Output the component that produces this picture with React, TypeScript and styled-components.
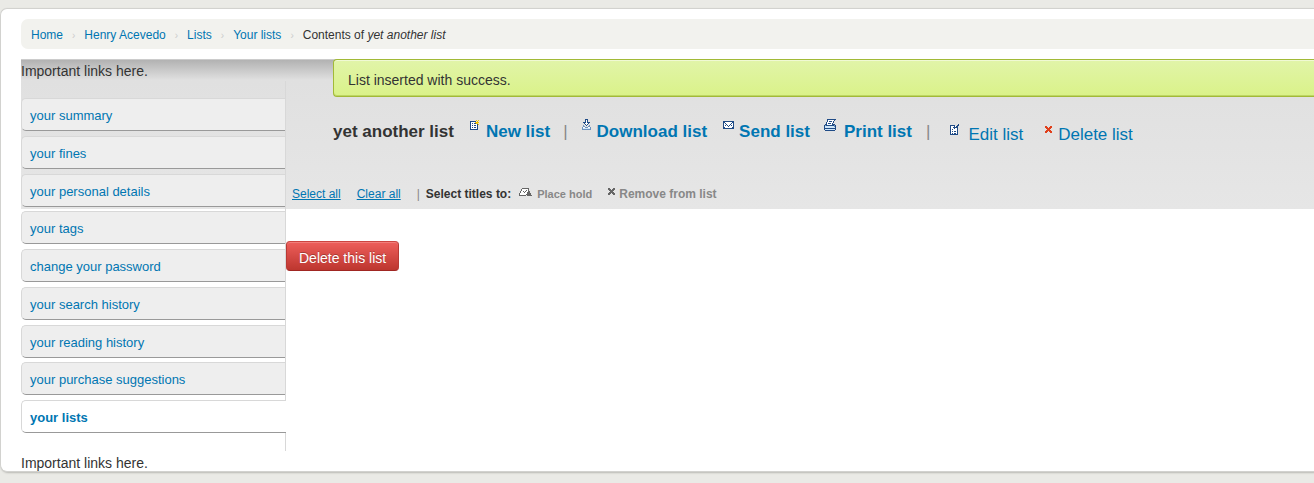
import React from "react";
import styled, { createGlobalStyle } from "styled-components";

const GlobalStyle = createGlobalStyle`
  * { box-sizing: border-box; }
  body {
    margin: 0;
    background: #eaeae6;
    color: #333;
    font: 14px/20px "Liberation Sans", Arial, Helvetica, sans-serif;
  }
  a { color: #0076b2; text-decoration: none; }
  a:hover { text-decoration: underline; }
  ul, ol { list-style: none; margin: 0; padding: 0; }
`;

const Page = styled.div`
  padding: 8px 0 12px;
`;

const Card = styled.div`
  padding: 10px 0 0 20px;
  background: #fff;
  border: 1px solid #d2d2cf;
  border-right: 0;
  border-radius: 7px 0 0 7px;
  box-shadow: 1px 1px 2px #b9b9b4;
`;

const Breadcrumb = styled.ol`
  display: flex;
  padding: 6px 10px 4px;
  margin-bottom: 10px;
  background: #f2f2ee;
  border-radius: 7px 0 0 7px;
  font-size: 12px;
`;

const Crumb = styled.li`
  &:not(:last-child)::after {
    content: "›";
    padding: 0 9px;
    color: #ccc;
    font-size: 10px;
    line-height: 10px;
  }
`;

const Columns = styled.div`
  display: flex;
  background: linear-gradient(#ccc 1px, #b2b2b2 1px, #e0e0e0 21px, #e6e6e6 150px) top / 100% 150px no-repeat;
`;

const Sidebar = styled.aside`
  flex: 0 0 265px;
`;

const Note = styled.p<{ $last?: boolean }>`
  margin: 0;
  padding-top: 2px;
  margin-bottom: ${(p) => (p.$last ? "-2px" : "0")};
`;

const Menu = styled.nav`
  padding: 17px 0 13px;
  border-right: 1px solid #d8d8d8;
`;

const MenuList = styled.ul`
  display: grid;
  grid-auto-rows: 1fr;
  height: 340px;
`;

const MenuLink = styled.a<{ $active?: boolean }>`
  display: block;
  height: 33px;
  padding-left: 8px;
  margin-right: ${(p) => (p.$active ? "-1px" : "0")};
  border: 1px solid #d8d8d8;
  border-bottom-color: #999;
  border-right: 0;
  border-radius: 5px 0 0 5px;
  background: ${(p) => (p.$active ? "#fff" : "#eee")};
  font-size: 13px;
  line-height: 33px;
  font-weight: ${(p) => (p.$active ? "bold" : "normal")};
`;

const Main = styled.main`
  flex: 1;
  min-width: 0;
`;

const Alert = styled.div`
  margin-left: 47px;
  padding: 10px 14px 6px;
  border: 1px solid #a2ba37;
  border-right: 0;
  border-radius: 4px 0 0 4px;
  background: linear-gradient(#e1f4a9, #daf289);
  box-shadow: inset 0 1px 0 #f0f9d4, inset 0 -1px 0 #bdd663;
`;

const Toolbar = styled.div`
  display: flex;
  margin: 25px 0 0 47px;
  font-size: 17px;
  white-space: nowrap;
`;

const Title = styled.h1`
  margin: 0 16px 0 0;
  font-size: 17px;
  line-height: 20px;
`;

const Action = styled.a<{ $gap: number; $plain?: boolean }>`
  display: flex;
  margin-right: ${(p) => p.$gap}px;
  padding-top: ${(p) => (p.$plain ? "3px" : "0")};
  font-weight: ${(p) => (p.$plain ? "normal" : "bold")};
`;

const Divider = styled.span<{ $gap: number }>`
  margin-right: ${(p) => p.$gap}px;
  color: #888;
  font-weight: normal;
`;

const IconBox = styled.svg<{ $gap: number; $drop: number }>`
  flex: none;
  margin-right: ${(p) => p.$gap}px;
  margin-top: ${(p) => p.$drop}px;
`;

const SelectionBar = styled.div`
  display: flex;
  margin-top: 39px;
  padding-left: 6px;
  font-size: 12px;
  font-weight: bold;
  white-space: nowrap;
`;

const SelectLink = styled.a`
  margin-right: 16px;
  font-weight: normal;
  text-decoration: underline;
`;

const SelectLabel = styled.span`
  margin-left: 6px;
`;

const BulkButton = styled.button<{ $small?: boolean }>`
  display: flex;
  margin: 0 8px;
  padding: 0;
  border: 0;
  background: none;
  color: #888;
  font: bold ${(p) => (p.$small ? "11px" : "12px")} / 20px "Liberation Sans", Arial, sans-serif;
`;

const DeleteButton = styled.button`
  display: block;
  height: 30px;
  margin-top: 37px;
  padding: 4px 12px 0;
  border: 1px solid #b83a35;
  border-top-color: #cc4540;
  border-bottom-color: #a02622;
  border-radius: 4px;
  background: linear-gradient(#ee5f5b, #bd362f);
  box-shadow: inset 0 1px 0 #f27f7b;
  color: #fff;
  font: 14px/20px "Liberation Sans", Arial, sans-serif;
  text-shadow: 0 -1px 0 rgba(0, 0, 0, 0.25);
`;

const palette: Record<string, string> = {
  b: "#1f4b86",
  m: "#6f93bd",
  w: "#ffffff",
  l: "#cfe6f8",
  y: "#f5c400",
  r: "#e0401c",
  g: "#666666",
};

const icons = {
  newList: [
    "......y.y",
    "bbbbbb.y.",
    "bwwwwyyyy",
    "bwbwbbyy.",
    "bwwwwwwby",
    "bwbwbbwb.",
    "bwwwwwwb.",
    "bwbwbbwb.",
    "bwwwwwwb.",
    "bbbbbbbb.",
  ],
  download: [
    "...bbb...",
    "...bwb...",
    "...bwb...",
    ".bbbwbbb.",
    "..bwwwb..",
    "...bwb...",
    ".m..b..m.",
    ".mm...mm.",
    "mwwmmmwwm",
    "mlllllllm",
    "mmmmmmmmm",
  ],
  send: [
    "bbbbbbbbbbb",
    "bbwwwwwwwbb",
    "bwbwwwwwbwb",
    "bwwbwwwbwwb",
    "bwbwbwbwbwb",
    "bwwwwbwwwwb",
    "bbwwwwwwwbb",
    "bbbbbbbbbbb",
  ],
  print: [
    "...bbbbbbbbb",
    "...bwwwwwwb.",
    "...bwbbbwb..",
    "..bwwwwwwb..",
    "..bwbbbwb...",
    ".bbwwwwwbbb.",
    "bmbbbbbbbbmb",
    "blllllllllmb",
    "bllllllllllb",
    "bbbbbbbbbbbb",
    "bllllllllllb",
    ".bbbbbbbbbb.",
  ],
  edit: [
    "........b",
    "bbbbb..bb",
    "bwwwbwbb.",
    "bwwbbbbb.",
    "bwwwbwwb.",
    "bwbwwwwb.",
    "bwwwwwwb.",
    "bwbwbbwb.",
    "bwwwwwwb.",
    "bwbwbbwb.",
    "bbbbbbbb.",
  ],
  remove: ["rr...rr", "rrr.rrr", ".rrrrr.", "..rrr..", ".rrrrr.", "rrr.rrr", "rr...rr"],
  clear: ["gg...gg", "ggg.ggg", ".ggggg.", "..ggg..", ".ggggg.", "ggg.ggg", "gg...gg"],
  hold: [
    "...ggggggg...",
    "..gwwwwwwg...",
    "..gwwwwgwg...",
    ".gwwgwgwwgg..",
    ".gwwwgwwggg..",
    "gwwwwwwwgggg.",
    "gwwwwwwggggg.",
    "ggggggg.ggggg",
  ],
};

function Icon({ name, gap, drop }: { name: keyof typeof icons; gap: number; drop: number }) {
  const rows = icons[name];
  return (
    <IconBox $gap={gap} $drop={drop} width={rows[0].length} height={rows.length} shapeRendering="crispEdges" aria-hidden="true">
      {rows.flatMap((row, y) =>
        [...row].map((c, x) =>
          c === "." ? null : <rect key={`${x}-${y}`} x={x} y={y} width="1" height="1" fill={palette[c]} />
        )
      )}
    </IconBox>
  );
}

const crumbs = ["Home", "Henry Acevedo", "Lists", "Your lists"];

const menu = [
  "your summary",
  "your fines",
  "your personal details",
  "your tags",
  "change your password",
  "your search history",
  "your reading history",
  "your purchase suggestions",
  "your lists",
];

export default function App() {
  return (
    <Page>
      <GlobalStyle />
      <Card>
        <Breadcrumb>
          {crumbs.map((c) => (
            <Crumb key={c}>
              <a href="#">{c}</a>
            </Crumb>
          ))}
          <Crumb>
            Contents of <em>yet another list</em>
          </Crumb>
        </Breadcrumb>
        <Columns>
          <Sidebar>
            <Note>Important links here.</Note>
            <Menu>
              <MenuList>
                {menu.map((m) => (
                  <li key={m}>
                    <MenuLink href="#" $active={m === "your lists"}>
                      {m}
                    </MenuLink>
                  </li>
                ))}
              </MenuList>
            </Menu>
            <Note $last>Important links here.</Note>
          </Sidebar>
          <Main>
            <Alert>List inserted with success.</Alert>
            <Toolbar>
              <Title>yet another list</Title>
              <Action href="#" $gap={13}>
                <Icon name="newList" gap={7} drop={-2} />
                New list
              </Action>
              <Divider $gap={14}>|</Divider>
              <Action href="#" $gap={16}>
                <Icon name="download" gap={6} drop={-3} />
                Download list
              </Action>
              <Action href="#" $gap={14}>
                <Icon name="send" gap={5} drop={-1} />
                Send list
              </Action>
              <Action href="#" $gap={14}>
                <Icon name="print" gap={8} drop={-3} />
                Print list
              </Action>
              <Divider $gap={20}>|</Divider>
              <Action href="#" $gap={22} $plain>
                <Icon name="edit" gap={9} drop={-1} />
                Edit list
              </Action>
              <Action href="#" $gap={0} $plain>
                <Icon name="remove" gap={6} drop={1} />
                Delete list
              </Action>
            </Toolbar>
            <SelectionBar>
              <SelectLink href="#">Select all</SelectLink>
              <SelectLink href="#">Clear all</SelectLink>
              <Divider $gap={0}>|</Divider>
              <SelectLabel>Select titles to:</SelectLabel>
              <BulkButton type="button" $small>
                <Icon name="hold" gap={5} drop={4} />
                Place hold
              </BulkButton>
              <BulkButton type="button">
                <Icon name="clear" gap={4} drop={4} />
                Remove from list
              </BulkButton>
            </SelectionBar>
            <DeleteButton type="button">Delete this list</DeleteButton>
          </Main>
        </Columns>
      </Card>
    </Page>
  );
}
